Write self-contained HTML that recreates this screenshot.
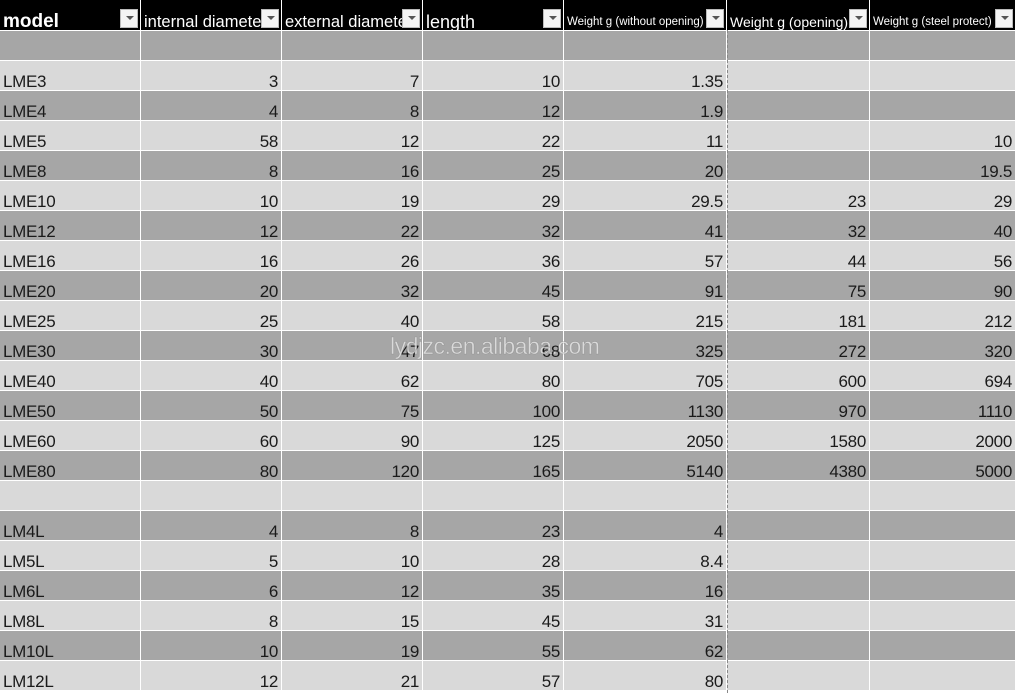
<!DOCTYPE html>
<html><head><meta charset="utf-8"><style>
body{margin:0;width:1016px;height:693px;overflow:hidden;background:#fff;font-family:"Liberation Sans",sans-serif;position:relative}
.c{position:absolute;box-sizing:border-box;height:29px;color:#1a1a1a;font-size:17px;line-height:29px;padding:0 3px;overflow:hidden;white-space:nowrap;letter-spacing:-0.3px;padding-top:6px}
.r{text-align:right}
.h{position:absolute;top:0;height:30px;background:#000;color:#fff;box-sizing:border-box;overflow:hidden;white-space:nowrap;padding-left:3px;line-height:44px}
.f{position:absolute;top:9px;width:18px;height:19px;background:#f4f4f4;border:1px solid #bbb;box-sizing:border-box;z-index:2}
.f:after{content:"";position:absolute;left:5px;top:6px;border-left:4px solid transparent;border-right:4px solid transparent;border-top:4px solid #555}
.wm{position:absolute;left:390px;top:333px;font-size:23px;color:rgba(235,235,235,0.75);letter-spacing:-0.5px;-webkit-text-stroke:0.5px rgba(120,120,120,0.5)}
.dash{position:absolute;left:727px;top:30px;width:0;height:663px;border-left:1px dashed #888}
</style></head><body>
<div id="g"></div>
<script>
var xs=[0,141,282,423,564,727,870,1016];
var heads=[["model",19,"bold"],["internal diameter",16.5,""],["external diameter",16.5,""],["length",18,""],["Weight g (without opening)",11.5,""],["Weight g (opening)",14,""],["Weight g (steel protect)",11.5,""]];
var rows=[
["","","","","","",""],
["LME3","3","7","10","1.35","",""],
["LME4","4","8","12","1.9","",""],
["LME5","58","12","22","11","","10"],
["LME8","8","16","25","20","","19.5"],
["LME10","10","19","29","29.5","23","29"],
["LME12","12","22","32","41","32","40"],
["LME16","16","26","36","57","44","56"],
["LME20","20","32","45","91","75","90"],
["LME25","25","40","58","215","181","212"],
["LME30","30","47","68","325","272","320"],
["LME40","40","62","80","705","600","694"],
["LME50","50","75","100","1130","970","1110"],
["LME60","60","90","125","2050","1580","2000"],
["LME80","80","120","165","5140","4380","5000"],
["","","","","","",""],
["LM4L","4","8","23","4","",""],
["LM5L","5","10","28","8.4","",""],
["LM6L","6","12","35","16","",""],
["LM8L","8","15","45","31","",""],
["LM10L","10","19","55","62","",""],
["LM12L","12","21","57","80","",""]];
var h="";
for(var i=0;i<7;i++){var w=xs[i+1]-xs[i]-1;
h+='<div class="h" style="left:'+xs[i]+'px;width:'+w+'px;font-size:'+heads[i][1]+'px;font-weight:'+(heads[i][2]||"normal")+'">'+heads[i][0]+'</div>';
h+='<div class="f" style="left:'+(xs[i+1]-21)+'px"></div>';}
for(var r=0;r<rows.length;r++){var y=31+r*30;var bg=r%2==0?"#a6a6a6":"#d9d9d9";
for(var i=0;i<7;i++){var w=xs[i+1]-xs[i]-1;
h+='<div class="c'+(i>0?' r':'')+'" style="left:'+xs[i]+'px;top:'+y+'px;width:'+w+'px;background:'+bg+'">'+rows[r][i]+'</div>';}}
h+='<div class="dash"></div><div class="wm">lydjzc.en.alibaba.com</div>';
document.getElementById("g").innerHTML=h;
</script>
</body></html>
